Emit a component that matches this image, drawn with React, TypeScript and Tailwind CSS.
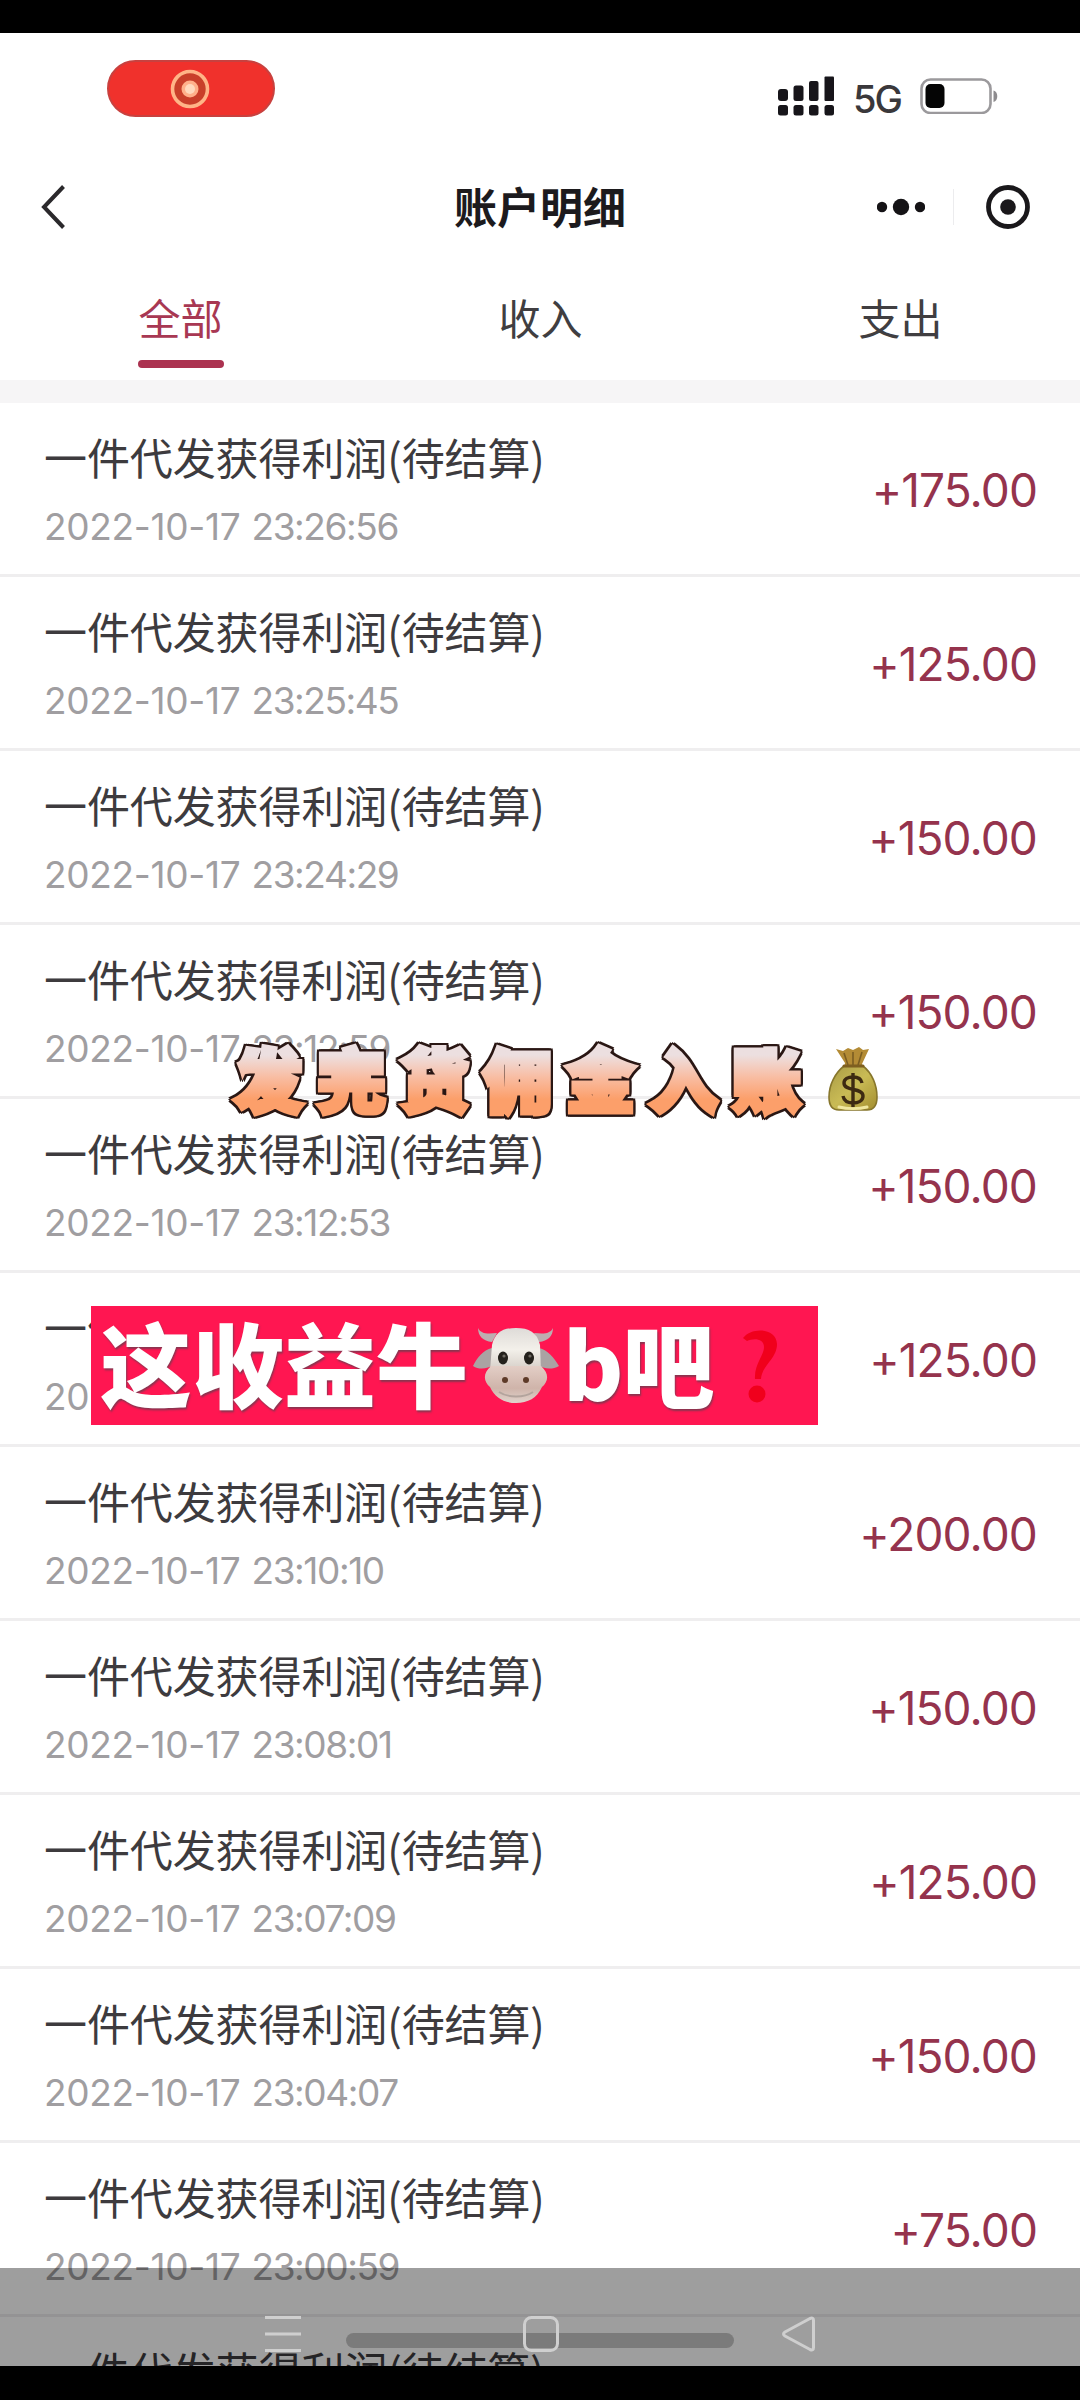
import { clsx } from 'clsx';

interface Entry {
  date: string;
  time: string;
  amount: string;
}

const ENTRY_TITLE = '一件代发获得利润(待结算)';

const entries: Entry[] = [
  { date: '2022-10-17', time: '23:26:56', amount: '+175.00' },
  { date: '2022-10-17', time: '23:25:45', amount: '+125.00' },
  { date: '2022-10-17', time: '23:24:29', amount: '+150.00' },
  { date: '2022-10-17', time: '23:12:59', amount: '+150.00' },
  { date: '2022-10-17', time: '23:12:53', amount: '+150.00' },
  { date: '2022-10-17', time: '23:11:34', amount: '+125.00' },
  { date: '2022-10-17', time: '23:10:10', amount: '+200.00' },
  { date: '2022-10-17', time: '23:08:01', amount: '+150.00' },
  { date: '2022-10-17', time: '23:07:09', amount: '+125.00' },
  { date: '2022-10-17', time: '23:04:07', amount: '+150.00' },
  { date: '2022-10-17', time: '23:00:59', amount: '+75.00' },
];

const tabs = ['全部', '收入', '支出'];

function SignalIcon() {
  return (
    <svg className="h-10 w-[57px]" viewBox="0 0 57 40" fill="#17151a">
      <rect x="0" y="13" width="10" height="12" rx="3" />
      <rect x="15.5" y="9.5" width="10" height="15.5" rx="2.5" />
      <rect x="31" y="5" width="9.5" height="20" rx="2" />
      <rect x="46.5" y="0.5" width="9.5" height="24.5" rx="1" />
      <rect x="0" y="29" width="10" height="10.5" rx="2.5" />
      <rect x="15.5" y="29" width="10" height="10.5" rx="2.5" />
      <rect x="31" y="29" width="9.5" height="10.5" rx="2.5" />
      <rect x="46.5" y="29" width="9.5" height="10.5" rx="2.5" />
    </svg>
  );
}

function BatteryIcon() {
  return (
    <svg className="h-9 w-[79px]" viewBox="0 0 79 36" fill="none">
      <rect x="1.5" y="1.5" width="69" height="33.5" rx="9" stroke="#9b999c" strokeWidth="2.6" />
      <rect x="5.5" y="6" width="19" height="24" rx="5" fill="#050505" />
      <path d="M73.5 12.5c5 1 5 10.5 0 11.5z" fill="#8d8b8e" />
    </svg>
  );
}

function StatusBar() {
  return (
    <div className="flex h-[119px] shrink-0 items-start justify-between pl-[107px] pr-[81px]">
      <div className="mt-[27px] flex h-[57px] w-[168px] items-center justify-center rounded-full border-2 border-[#c8413f] bg-[#f0312c]">
        <svg className="size-11" viewBox="0 0 44 44">
          <circle cx="21" cy="22" r="17.5" fill="#c93f2a" stroke="#ffb487" strokeWidth="3.6" />
          <circle cx="21" cy="22" r="8.5" fill="#ffb08a" />
          <circle cx="21" cy="22" r="5" fill="#ffd9bd" />
        </svg>
      </div>
      <div className="mt-[43px] flex h-10 items-center">
        <SignalIcon />
        <span className="ml-[18px] mt-[6px] w-[50px] font-['Inter'] text-[38px] font-medium leading-10 tracking-[-2px] text-[#3a383b]">
          5G
        </span>
        <span className="ml-[17px]">
          <BatteryIcon />
        </span>
      </div>
    </div>
  );
}

function NavBar() {
  return (
    <div className="grid h-[110px] shrink-0 grid-cols-3 items-center">
      <svg className="ml-10 h-12 w-7" viewBox="0 0 28 48" fill="none">
        <path d="M23.5 3.500 4 24l19.500 20.500" stroke="#2b292c" strokeWidth="4" />
      </svg>
      <h1 className="-mt-[3px] text-center text-[43px] font-bold leading-none text-[#1c1a1d]">
        账户明细
      </h1>
      <div className="flex items-center justify-end pr-[49px]">
        <svg className="h-5 w-12" viewBox="0 0 48 20" fill="#151316">
          <circle cx="5" cy="10" r="5.2" />
          <circle cx="24" cy="10" r="8.2" />
          <circle cx="43" cy="10" r="5.2" />
        </svg>
        <span className="ml-7 h-9 w-px bg-[#ececee]" />
        <svg className="ml-[31px] size-[46px]" viewBox="0 0 46 46">
          <circle cx="23" cy="23" r="19.5" fill="none" stroke="#1a181b" strokeWidth="4.8" />
          <circle cx="23" cy="23" r="7.8" fill="#1a181b" />
        </svg>
      </div>
    </div>
  );
}

function Tabs() {
  return (
    <div className="grid h-[118px] shrink-0 grid-cols-3">
      {tabs.map((tab, i) => (
        <div key={tab} className="flex flex-col items-center pl-px pt-[30px]">
          <span
            className={clsx(
              'text-[42px] leading-[50px]',
              i === 0 ? 'text-[#a83853]' : 'text-[#403e41]'
            )}
          >
            {tab}
          </span>
          {i === 0 ? <span className="mt-[18px] h-2 w-[86px] rounded-full bg-[#ab3250]" /> : null}
        </div>
      ))}
    </div>
  );
}

function EntryRow({ entry }: { entry: Entry }) {
  return (
    <li className="flex h-[174px] items-center justify-between border-b-[3px] border-[#efeeef] pl-[44px] pr-[43px]">
      <div>
        <div className="whitespace-nowrap text-[43px] leading-[56px] tracking-[-0.1px] text-[#3d3b3e]">
          {ENTRY_TITLE}
        </div>
        <div className="mt-[20px] flex gap-[11px] whitespace-nowrap font-['Inter'] text-[37px] leading-[46px] text-[#a09ea1]">
          <span className="tracking-[-0.3px]">{entry.date}</span>
          <span className="tracking-[-1.4px]">{entry.time}</span>
        </div>
      </div>
      <span className="mt-[3px] font-['Inter'] text-[46px] tracking-[-0.9px] text-[#95334d]">
        {entry.amount}
      </span>
    </li>
  );
}

function MoneyBag() {
  return (
    <svg className="h-[66px] w-[52px]" viewBox="0 0 52 66">
      <defs>
        <linearGradient id="bag" x1="0" y1="0" x2="1" y2="1">
          <stop offset="0" stopColor="#a89a45" />
          <stop offset="0.5" stopColor="#c9bb55" />
          <stop offset="1" stopColor="#a38d2f" />
        </linearGradient>
      </defs>
      <path d="M9 3l7 2 5-3 5 2 6-3 4 3 6-1-7 15 1 5H17l1-6z" fill="#b38b35" />
      <path d="M17 7l4 12M26 6v13M35 6l-4 13" stroke="#7b5d22" strokeWidth="1.6" />
      <path
        d="M17 20h19c9 7 14 19 14 31 0 9-4 13-10 13H12C5 64 2 60 2 51c0-12 6-24 15-31z"
        fill="url(#bag)"
        stroke="#87762c"
        strokeWidth="1.6"
      />
      <path d="M12 61c8 2 20 2 28 0" stroke="#f0e7a0" strokeWidth="3" fill="none" strokeLinecap="round" />
      <path d="M17 20h19" stroke="#7e5f20" strokeWidth="3" strokeLinecap="round" />
      <path
        d="M35 37c-1-5-5-6-9-6-5 0-9 2-9 6 0 9 19 4 19 13 0 5-5 7-10 7s-9-2-10-7M26 27v34"
        stroke="#3d2a12"
        strokeWidth="3.4"
        fill="none"
      />
    </svg>
  );
}

function CowFace() {
  return (
    <svg className="h-[78px] w-[88px]" viewBox="0 0 88 78">
      <defs>
        <linearGradient id="head" x1="0" y1="0" x2="0" y2="1">
          <stop offset="0" stopColor="#dedbd8" />
          <stop offset="0.5" stopColor="#f3f0ea" />
          <stop offset="1" stopColor="#d4cdc6" />
        </linearGradient>
        <linearGradient id="muzzle" x1="0" y1="0" x2="0" y2="1">
          <stop offset="0" stopColor="#e3cec6" />
          <stop offset="0.6" stopColor="#cfb4aa" />
          <stop offset="1" stopColor="#e0d3cc" />
        </linearGradient>
      </defs>
      <path d="M6 1c3 6 9 6 19 5l-5 9C11 14 6 9 6 1zM81 1c-3 6-9 6-19 5l5 9C76 14 81 9 81 1z" fill="#bdaeb0" />
      <path d="M20 21C11 23 5 31 1 39c6 4 14 3 21-1zM67 21c9 2 15 10 20 18-7 4-15 3-22-1z" fill="#aaa3a3" />
      <path d="M20 18C23 5 31 1 44 1s21 4 24 17l1 26H18z" fill="url(#head)" />
      <path d="M19 39h50c9 8 7 16 1 21-5 11-14 16-26 16s-21-5-26-16c-6-5-8-13 1-21z" fill="url(#muzzle)" />
      <path d="M27 65c9 6 25 6 34 0" stroke="#b3a49d" strokeWidth="2" fill="none" />
      <ellipse cx="31" cy="31" rx="5" ry="6.5" fill="#24211c" />
      <ellipse cx="57" cy="31" rx="5" ry="6.5" fill="#24211c" />
      <circle cx="32" cy="29" r="1.6" fill="#6e6a62" />
      <circle cx="58" cy="29" r="1.6" fill="#6e6a62" />
      <circle cx="33" cy="53" r="3" fill="#5e3a28" />
      <circle cx="54" cy="53" r="3" fill="#5e3a28" />
    </svg>
  );
}

function QuestionMark() {
  return (
    <svg className="h-[74px] w-9" viewBox="0 0 36 74">
      <path
        d="M1 9C9-2 34-2 35 15c0 15-15 21-16 35h-6C12 35 22 27 22 18 22 9 11 9 5 12z"
        fill="#f0001c"
      />
      <circle cx="15" cy="65" r="8.5" fill="#f0001c" />
    </svg>
  );
}

function CommissionCaption() {
  return (
    <div className="absolute left-[228px] top-[1029px] flex h-[100px] items-center">
      <span className="-mt-[5px] w-[588px] whitespace-nowrap bg-linear-to-b from-[#ecdfe0] from-28% via-[#f8bda3] via-50% to-[#fc9f6a] to-72% bg-clip-text pl-[6px] text-[69px] font-black leading-[100px] tracking-[14px] text-transparent [-webkit-text-stroke:5px_transparent] [filter:drop-shadow(2px_0_0_#2a1714)_drop-shadow(-2px_0_0_#2a1714)_drop-shadow(0_2px_0_#2a1714)_drop-shadow(0_-2px_0_#2a1714)]">
        发完货佣金入账
      </span>
      <span className="ml-[11px]">
        <MoneyBag />
      </span>
    </div>
  );
}

function IncomeBanner() {
  return (
    <div className="absolute left-[91px] top-[1306px] flex h-[119px] w-[727px] items-center bg-[#ff1651] pl-[9px] text-[92px] font-black leading-[119px] text-white [text-shadow:1px_2px_2px_#8a3550]">
      <span className="-mt-[10px] whitespace-nowrap">这收益牛</span>
      <span className="ml-[4px]">
        <CowFace />
      </span>
      <span className="-mt-[10px] ml-[3px] w-[151px] whitespace-nowrap tracking-[-1px]">b吧</span>
      <span className="ml-[28px]">
        <QuestionMark />
      </span>
    </div>
  );
}

function SystemNav() {
  return (
    <div className="absolute inset-x-0 top-[2268px] flex h-[98px] items-start justify-center bg-black/38">
      <div className="mt-[65px] h-[15px] w-[388px] rounded-full bg-black/22" />
      <svg
        className="absolute left-[260px] top-[44px] h-11 w-[560px]"
        viewBox="0 0 560 44"
        fill="none"
        stroke="#cfcfcf"
        strokeWidth="3"
      >
        <path d="M5 5.5h36M5 22h36M5 38.5h36" />
        <rect x="264.5" y="5.5" width="33" height="33" rx="7" />
        <path d="M550 6.5 525 20q-3 2 0 4l25 13.500q3.500 1.500 3.500-2V8.500q0-3.500-3.500-2z" />
      </svg>
    </div>
  );
}

export default function App() {
  return (
    <div className="relative flex h-[2400px] w-[1080px] flex-col overflow-hidden bg-white font-['Noto_Sans_CJK_SC',sans-serif]">
      <div className="h-[33px] shrink-0 bg-black" />
      <StatusBar />
      <NavBar />
      <Tabs />
      <div className="h-[23px] shrink-0 bg-[#f6f5f6]" />
      <ul className="h-[1963px] shrink-0 overflow-hidden">
        {entries.map((entry) => (
          <EntryRow key={entry.time} entry={entry} />
        ))}
        <li className="h-[174px] whitespace-nowrap pl-[44px] pt-[25px] text-[43px] leading-[56px] tracking-[-0.1px] text-[#3d3b3e]">
          {ENTRY_TITLE}
        </li>
      </ul>
      <div className="flex-1 bg-black" />
      <CommissionCaption />
      <IncomeBanner />
      <SystemNav />
    </div>
  );
}
